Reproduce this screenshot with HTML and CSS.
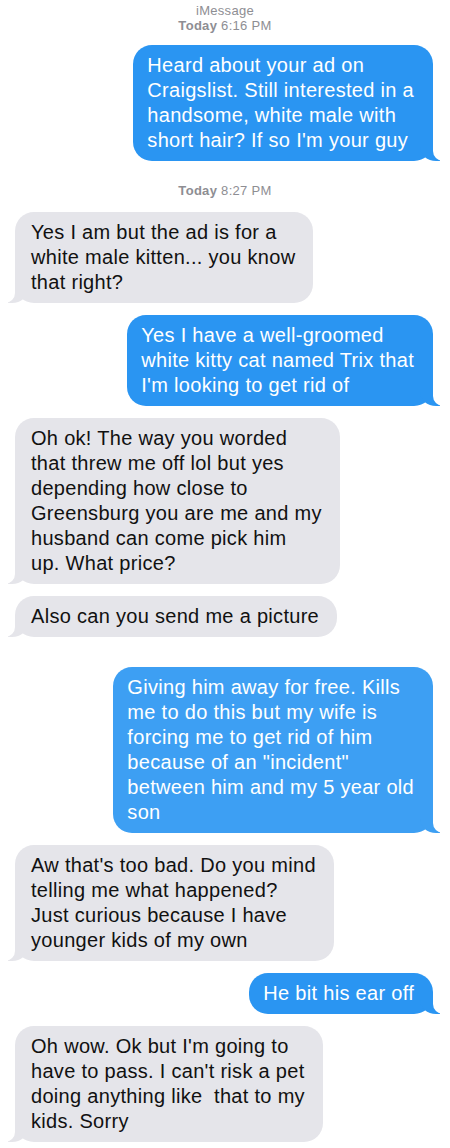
FILE: index.html
```html
<!DOCTYPE html>
<html lang="en">
<head>
<meta charset="utf-8">
<title>iMessage</title>
<link rel="stylesheet" href="styles.css">
</head>
<body>
<main class="thread">
  <header class="meta meta-top">
    <div class="service">iMessage</div>
    <div class="stamp"><b>Today</b> 6:16 PM</div>
  </header>

  <div class="bubble sent first">Heard about your ad on<br>Craigslist. Still interested in a<br>handsome, white male with<br>short hair? If so I'm your guy</div>

  <div class="meta meta-mid">
    <div class="stamp"><b>Today</b> 8:27 PM</div>
  </div>

  <div class="bubble recv">Yes I am but the ad is for a<br>white male kitten... you know<br>that right?</div>

  <div class="bubble sent">Yes I have a well-groomed<br>white kitty cat named Trix that<br>I'm looking to get rid of</div>

  <div class="bubble recv">Oh ok! The way you worded<br>that threw me off lol but yes<br>depending how close to<br>Greensburg you are me and my<br>husband can come pick him<br>up. What price?</div>

  <div class="bubble recv">Also can you send me a picture</div>

  <div class="bubble sent light spaced">Giving him away for free. Kills<br>me to do this but my wife is<br>forcing me to get rid of him<br>because of an "incident"<br>between him and my 5 year old<br>son</div>

  <div class="bubble recv">Aw that's too bad. Do you mind<br>telling me what happened?<br>Just curious because I have<br>younger kids of my own</div>

  <div class="bubble sent">He bit his ear off</div>

  <div class="bubble recv">Oh wow. Ok but I'm going to<br>have to pass. I can't risk a pet<br>doing anything like&nbsp; that to my<br>kids. Sorry</div>
</main>
</body>
</html>
```

FILE: styles.css
```css
* {
  box-sizing: border-box;
}

html, body {
  margin: 0;
  padding: 0;
  background: #ffffff;
}

body {
  font-family: "Liberation Sans", Arial, sans-serif;
  width: 450px;
  overflow: hidden;
}

.thread {
  display: flex;
  flex-direction: column;
  align-items: flex-start;
  padding: 3px 15px 20px 15px;
  gap: 12px;
}

.meta {
  align-self: stretch;
  text-align: center;
  color: #8e8e93;
  font-size: 13px;
  line-height: 15px;
  letter-spacing: 0.3px;
}

.meta b {
  font-weight: bold;
}

.meta-mid {
  margin-top: 10px;
  margin-bottom: 2px;
}

.bubble {
  position: relative;
  font-size: 20px;
  line-height: 25px;
  letter-spacing: 0.3px;
  padding: 8px 18px 8px 16px;
  border-radius: 19px;
  white-space: nowrap;
}

.recv {
  background: #e5e5ea;
  color: #111111;
}

.sent {
  align-self: flex-end;
  background: #2a95f2;
  color: #ffffff;
  padding: 8px 19px 8px 14px;
  margin-right: 2px;
}

.sent.light {
  background: #3d9ff3;
}

.spaced {
  margin-top: 18px;
}

/* bubble tails */
.bubble::before,
.bubble::after {
  content: "";
  position: absolute;
  bottom: 0;
  height: 20px;
}

.sent::before {
  right: -7px;
  width: 20px;
  background: inherit;
  border-bottom-left-radius: 16px 14px;
}

.sent::after {
  right: -26px;
  width: 26px;
  background: #ffffff;
  border-bottom-left-radius: 10px;
}

.recv::before {
  left: -7px;
  width: 20px;
  background: #e5e5ea;
  border-bottom-right-radius: 16px 14px;
}

.recv::after {
  left: -26px;
  width: 26px;
  background: #ffffff;
  border-bottom-right-radius: 10px;
}
```
